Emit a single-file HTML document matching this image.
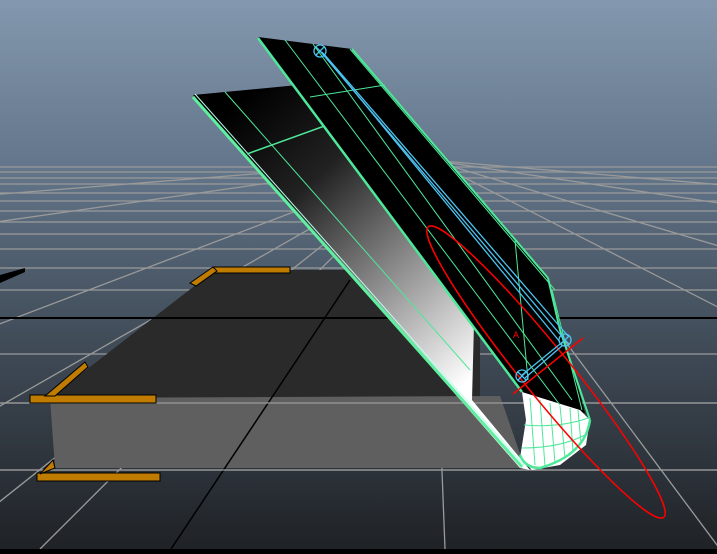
<!DOCTYPE html>
<html><head><style>html,body{margin:0;padding:0;overflow:hidden;background:#000}</style></head>
<body>
<svg width="717" height="549" viewBox="0 0 717 549" xmlns="http://www.w3.org/2000/svg">
<defs>
<linearGradient id="bg" x1="0" y1="0" x2="0" y2="1">
<stop offset="0" stop-color="#8397ae"/>
<stop offset="0.3" stop-color="#63768b"/>
<stop offset="0.55" stop-color="#475462"/>
<stop offset="1" stop-color="#1f2226"/>
</linearGradient>
<linearGradient id="sh" x1="230" y1="110" x2="470" y2="380" gradientUnits="userSpaceOnUse">
<stop offset="0" stop-color="#000"/>
<stop offset="0.3" stop-color="#222"/>
<stop offset="1" stop-color="#fff"/>
</linearGradient>
</defs>
<rect width="717" height="549" fill="url(#bg)"/>
<g stroke="#9a9a9a" stroke-width="1.3" fill="none">
<line x1="0" y1="167" x2="717" y2="167"/><line x1="0" y1="172" x2="717" y2="172"/>
<line x1="0" y1="178" x2="717" y2="178"/><line x1="0" y1="184" x2="717" y2="184"/>
<line x1="0" y1="193" x2="717" y2="193"/><line x1="0" y1="201" x2="717" y2="201"/>
<line x1="0" y1="211" x2="717" y2="211"/><line x1="0" y1="222" x2="717" y2="222"/>
<line x1="0" y1="234" x2="717" y2="234"/><line x1="0" y1="249" x2="717" y2="249"/>
<line x1="0" y1="268" x2="717" y2="268"/><line x1="0" y1="290" x2="717" y2="290"/>
<line x1="0" y1="354" x2="717" y2="354"/><line x1="0" y1="403" x2="717" y2="403"/>
<line x1="0" y1="470" x2="717" y2="470"/>
<line x1="430" y1="160" x2="-200" y2="400"/><line x1="430" y1="160" x2="-250" y2="549"/>
<line x1="430" y1="160" x2="-60" y2="549"/><line x1="430" y1="160" x2="40" y2="549"/>
<line x1="430" y1="160" x2="445" y2="549"/><line x1="430" y1="160" x2="720" y2="549"/>
<line x1="430" y1="160" x2="900" y2="400"/><line x1="430" y1="160" x2="900" y2="300"/>
<line x1="430" y1="160" x2="900" y2="230"/><line x1="430" y1="160" x2="900" y2="200"/>
<line x1="430" y1="160" x2="-200" y2="250"/><line x1="430" y1="160" x2="-200" y2="210"/>
</g>
<!-- floor slab -->
<polygon points="215,270 480,270 480,398 50,398" fill="#2a2a2a"/>
<polygon points="50,398 500,396 525,468 55,468" fill="#5f5f5f"/>
<line x1="0" y1="318" x2="717" y2="318" stroke="#000" stroke-width="2"/>
<line x1="171" y1="549" x2="350" y2="280" stroke="#000" stroke-width="1.5"/>
<line x1="0" y1="470" x2="717" y2="470" stroke="#9a9a9a" stroke-width="1.3"/>
<line x1="0" y1="403" x2="717" y2="403" stroke="#9a9a9a" stroke-width="1.3"/>
<!-- orange brackets -->
<g fill="#c07c00" stroke="#000" stroke-width="1">
<rect x="213" y="267" width="77" height="6"/>
<polygon points="190,283 213,267 217,271 196,286"/>
<rect x="30" y="395" width="126" height="8"/>
<polygon points="45,396 85,362 88,367 55,396"/>
<rect x="37" y="473" width="123" height="8"/>
<polygon points="40,474 53,460 55,468"/>
</g>
<polygon points="0,275 25,268 25,272 0,283" fill="#000"/>
<!-- back sheet -->
<polygon points="193,95 298,85 475,285 472,400 530,470 520,468" fill="url(#sh)"/>
<line x1="193" y1="97" x2="522" y2="467" stroke="#5ef0a0" stroke-width="3"/>
<line x1="195" y1="94" x2="524" y2="465" stroke="#bfe" stroke-width="1"/>
<line x1="225" y1="92" x2="470" y2="370" stroke="#4ee89a" stroke-width="1"/>
<line x1="247" y1="154" x2="330" y2="124" stroke="#4ee89a" stroke-width="1.5"/>
<!-- front sheet -->
<polygon points="258,37 352,49 548,278 562,330 585,413 578,412 522,392" fill="#000"/>
<polygon points="522,392 580,410 590,420 586,445 560,465 532,470 520,458 526,420" fill="#fff"/>
<g stroke="#4ee89a" stroke-width="1" fill="none">
<line x1="258" y1="38" x2="522" y2="392" stroke-width="2.5"/>
<line x1="285" y1="40" x2="560" y2="405"/>
<line x1="313" y1="44" x2="572" y2="400"/>
<line x1="350" y1="49" x2="555" y2="290"/>
<line x1="310" y1="97" x2="385" y2="85"/>
<line x1="352" y1="49" x2="548" y2="278" stroke-width="2"/>
<path d="M548,278 L560,330 L590,420" stroke-width="2"/>
<line x1="552" y1="290" x2="582" y2="410"/>
<path d="M590,420 Q585,455 540,468 Q525,468 520,455" stroke-width="2.5"/>
<path d="M530,398 L535,465 M540,400 L545,466 M550,403 L555,463 M560,406 L565,458 M570,408 L573,452 M578,410 L581,444 M524,425 Q560,428 588,418 M522,448 Q560,448 585,435"/>
<line x1="515" y1="240" x2="528" y2="380"/>
</g>
<!-- red ellipse -->
<ellipse cx="546" cy="372" rx="187" ry="24" transform="rotate(51 546 372)" fill="none" stroke="#f00" stroke-width="1.5"/>
<line x1="513" y1="394" x2="583" y2="338" stroke="#f00" stroke-width="1.5"/>
<text x="513" y="338" fill="#f00" font-family="Liberation Sans, sans-serif" font-size="9">A</text>
<!-- blue -->
<g stroke="#4cc4f0" stroke-width="1.3" fill="none">
<line x1="320" y1="51" x2="565" y2="340"/>
<line x1="322" y1="52" x2="560" y2="342"/>
<line x1="324" y1="54" x2="568" y2="336"/>
<line x1="522" y1="375" x2="565" y2="340"/>
<line x1="525" y1="378" x2="563" y2="345"/>
<circle cx="320" cy="51" r="6"/><path d="M316,47 L324,55 M324,47 L316,55"/>
<circle cx="565" cy="340" r="6"/><path d="M561,336 L569,344 M569,336 L561,344"/>
<circle cx="522" cy="376" r="6"/><path d="M518,372 L526,380 M526,372 L518,380"/>
</g>
</svg>
</body></html>
